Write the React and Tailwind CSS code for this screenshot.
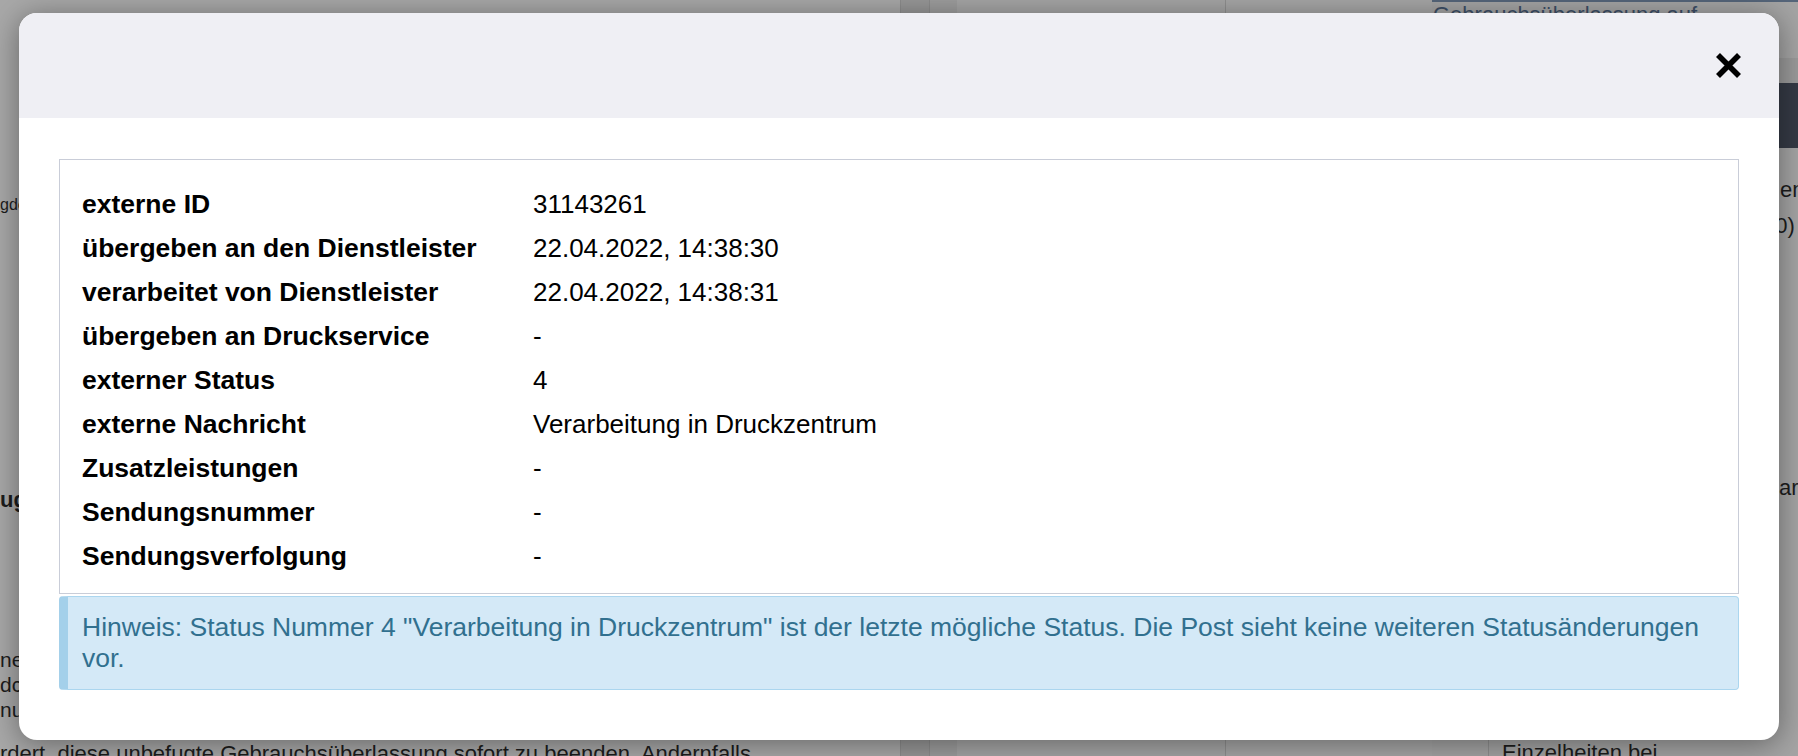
import React from 'react';

const rows = [
  ['externe ID', '31143261'],
  ['übergeben an den Dienstleister', '22.04.2022, 14:38:30'],
  ['verarbeitet von Dienstleister', '22.04.2022, 14:38:31'],
  ['übergeben an Druckservice', '-'],
  ['externer Status', '4'],
  ['externe Nachricht', 'Verarbeitung in Druckzentrum'],
  ['Zusatzleistungen', '-'],
  ['Sendungsnummer', '-'],
  ['Sendungsverfolgung', '-'],
];

const CloseIcon = () => (
  <svg width="27" height="27" viewBox="0 0 27 27" aria-hidden="true">
    <path d="M3 3 L24 24 M24 3 L3 24" stroke="#000" strokeWidth="5.6" strokeLinecap="butt" />
  </svg>
);

// dimmed page behind the dialog
const Backdrop = () => (
  <div className="flex h-full w-full text-[#1c1c1c]">
    <div className="flex w-[900px] shrink-0 flex-col">
      <div className="flex flex-1 flex-col">
        <div className="mt-[195px] w-[19px] overflow-hidden whitespace-nowrap text-[16px] leading-[20px]">gdetails</div>
        <div className="mt-[272px] w-[19px] overflow-hidden whitespace-nowrap text-[22px] font-bold leading-[26px]">ugang</div>
        <div className="mt-[134px] w-[19px] overflow-hidden whitespace-nowrap text-[21px] leading-[25px]">
          <div>nen</div>
          <div>dch</div>
          <div>nun</div>
        </div>
      </div>
      <div className="h-[14px] overflow-hidden whitespace-nowrap text-[22px] leading-[24px]">
        rdert, diese unbefugte Gebrauchsüberlassung sofort zu beenden. Andernfalls
      </div>
    </div>
    <div className="w-[29px] shrink-0 border-l border-[#8c8c8c] bg-[#979797]" />
    <div className="w-[28px] shrink-0 border-l border-[#8c8c8c] bg-[#9d9d9d]" />
    <div className="w-[268px] shrink-0 bg-[#a5a5a5]" />
    <div className="w-[207px] shrink-0 border-l border-[#8f8f8f] bg-[#a6a6a6]" />
    <div className="flex min-w-0 flex-1 flex-col overflow-hidden bg-[#a4a4a4]">
      <div className="h-[2px] bg-[#55657a]" />
      <div className="h-[12px] overflow-hidden whitespace-nowrap pl-[1px] text-[22px] leading-[26px] text-[#3c4e66]">
        Gebrauchsüberlassung auf
      </div>
      <div className="mt-[44px] h-[25px] bg-[#9a9a9a]" />
      <div className="h-[65px] bg-[#353a45]" />
      <div className="mt-[24px] whitespace-nowrap text-[22px] leading-[36px]">
        <div className="pl-[348px]">ent</div>
        <div className="pl-[336px]">(0)</div>
      </div>
      <div className="mt-[226px] whitespace-nowrap pl-[347px] text-[22px] leading-[36px]">are</div>
      <div className="mt-auto ml-[56px] h-[18px] overflow-hidden whitespace-nowrap border-l border-[#8f8f8f] pl-[13px] text-[22px] leading-[30px]">
        Einzelheiten bei
      </div>
    </div>
  </div>
);

export default function App() {
  return (
    <div className="relative h-[756px] w-[1798px] overflow-hidden bg-[#a8a8a8] font-['Liberation_Sans',Arial,sans-serif]">
      <Backdrop />

      <div className="absolute left-[19px] top-[13px] flex h-[727px] w-[1760px] flex-col overflow-hidden rounded-[18px] bg-white shadow-[0_4px_30px_rgba(0,0,0,0.4)]">
        <div className="flex h-[105px] items-center justify-end bg-[#efeff4] pr-[37px]">
          <button type="button" className="flex items-center justify-center">
            <CloseIcon />
          </button>
        </div>

        <div className="px-10 pt-[41px]">
          <div className="border border-[#c9cdd8] pb-[15px] pl-[22px] pt-[22px] text-[26px] leading-[44px] text-black">
            {rows.map(([label, value]) => (
              <div key={label} className="grid grid-cols-[451px_1fr]">
                <div className="text-[26.5px] font-bold">{label}</div>
                <div>{value}</div>
              </div>
            ))}
          </div>

          <div className="mt-[2px] rounded-[4px] border border-l-[9px] border-[#abd6ef] border-l-[#a4d0ea] bg-[#d4e9f7] py-[15px] pl-[14px] pr-[14px] text-[26.5px] leading-[31px] text-[#31708f]">
            Hinweis: Status Nummer 4 "Verarbeitung in Druckzentrum" ist der letzte mögliche Status. Die Post sieht keine weiteren Statusänderungen vor.
          </div>
        </div>
      </div>
    </div>
  );
}
